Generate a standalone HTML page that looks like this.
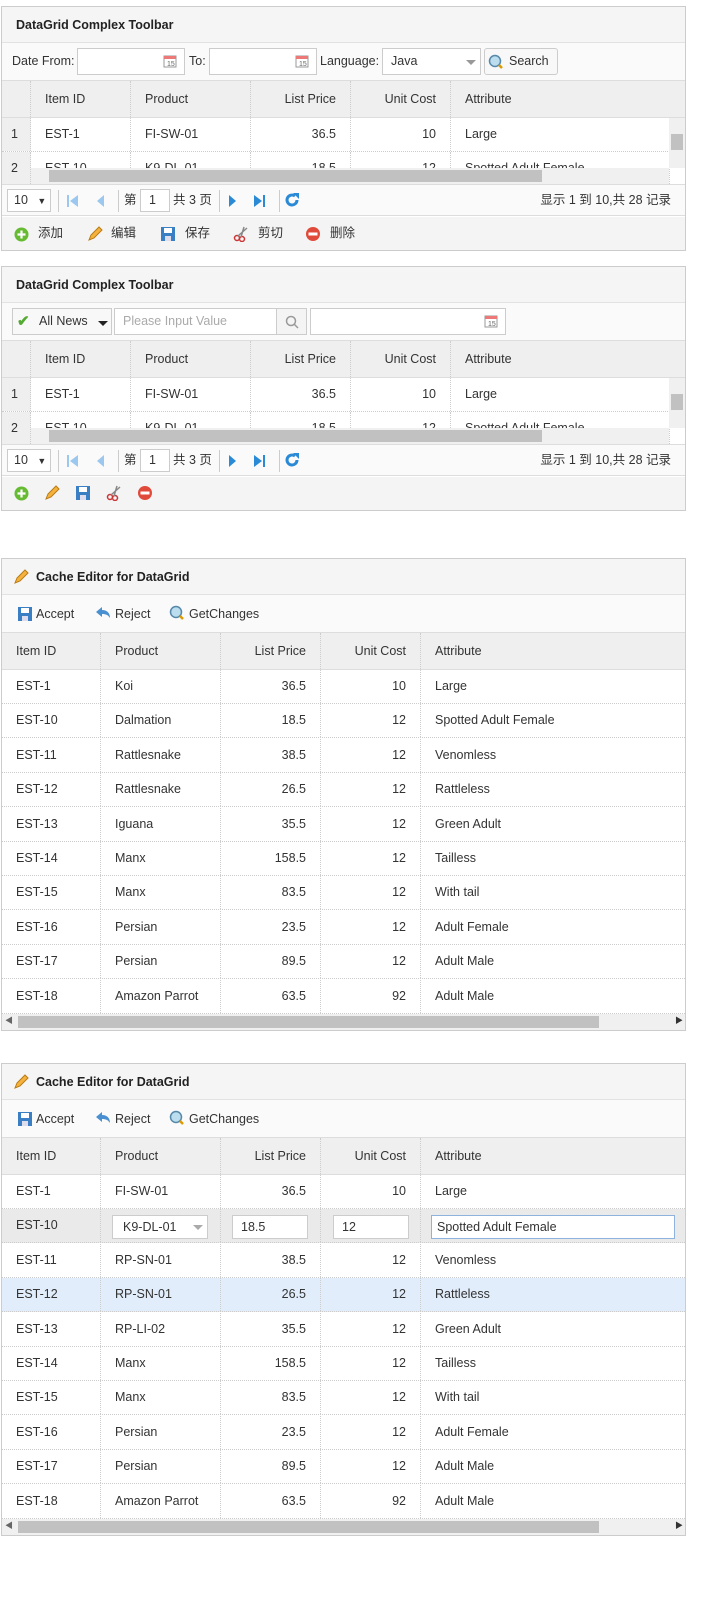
<!DOCTYPE html>
<html><head><meta charset="utf-8"><style>
*{box-sizing:border-box;margin:0;padding:0}
body{width:722px;height:1602px;background:#fff;font-family:"Liberation Sans","Noto Sans CJK SC",sans-serif;font-size:12.5px;color:#333;position:relative;overflow:hidden}
.p{position:absolute;left:1px;width:685px;border:1px solid #ccc;background:#fff;overflow:hidden}
.a{position:absolute}
.hd{position:absolute;left:0;top:0;width:100%;height:36px;background:#f5f5f5;border-bottom:1px solid #e2e2e2;font-weight:bold;font-size:12.5px;line-height:36px;padding-left:14px;color:#222}
.tb{position:absolute;left:0;top:36px;width:100%;height:38px;background:#fafafa;border-bottom:1px solid #ddd}
.r{position:absolute;left:0;display:flex;height:34px;border-bottom:1px dotted #ccc;background:#fff}
.gh{background:#efefef;height:37px;border-bottom:1px solid #ddd}
.c{border-right:1px dotted #ccc;padding:0 14px;line-height:33px;white-space:nowrap;overflow:hidden;flex:none}
.gh .c{line-height:36px}
.rt{text-align:right}
.rn{background:#efefef;padding:0 9px}
.inp{position:absolute;background:#fff;border:1px solid #ccc;height:27px;line-height:25px;padding-left:8px}
.hs{position:absolute;height:16px;background:#f0f0f0}
.hs i{position:absolute;top:2px;height:12px;background:#c1c1c1}
.pg{position:absolute;left:0;width:100%;height:32px;background:#fafafa;border-top:1px solid #ddd;border-bottom:1px solid #ddd}
.pg span{line-height:30px;top:0}
.sep{position:absolute;top:5px;width:1px;height:22px;background:#ccc}
.bt{position:absolute;left:0;width:100%;background:#f4f4f4}
.bt span{line-height:33px;top:0}
</style></head><body>

<!-- PANEL 1 -->
<div class="p" style="top:6px;height:245px">
 <div class="hd">DataGrid Complex Toolbar</div>
 <div class="tb">
  <span class="a" style="left:10px;top:11px">Date From:</span>
  <div class="inp" style="left:75px;top:5px;width:108px"></div>
  <svg class="a" style="left:161px;top:11px" width="14" height="14"><rect x="1" y="2" width="12" height="11" fill="#fff" stroke="#999"/><rect x="1" y="2" width="12" height="3" fill="#e77"/><text x="4" y="12" font-size="7" fill="#666">15</text></svg>
  <span class="a" style="left:187px;top:11px">To:</span>
  <div class="inp" style="left:207px;top:5px;width:108px"></div>
  <svg class="a" style="left:293px;top:11px" width="14" height="14"><rect x="1" y="2" width="12" height="11" fill="#fff" stroke="#999"/><rect x="1" y="2" width="12" height="3" fill="#e77"/><text x="4" y="12" font-size="7" fill="#666">15</text></svg>
  <span class="a" style="left:318px;top:11px">Language:</span>
  <div class="inp" style="left:380px;top:5px;width:99px">Java</div>
  <div class="a" style="left:464px;top:17px;border:5px solid transparent;border-top:5px solid #999"></div>
  <div class="inp" style="left:482px;top:5px;width:74px;border-radius:3px;padding-left:24px;background:#f8f8f8">Search</div>
  <svg class="a" style="left:486px;top:11px" width="16" height="16"><circle cx="7" cy="7" r="5.5" fill="#bde" stroke="#58a" stroke-width="1.5"/><line x1="11" y1="11" x2="14" y2="14" stroke="#d90" stroke-width="2.5"/></svg>
 </div>
 <div class="r gh" style="top:74px"><div class="c rn" style="width:29px"></div><div class="c" style="width:100px">Item ID</div><div class="c" style="width:120px">Product</div><div class="c rt" style="width:100px">List Price</div><div class="c rt" style="width:100px">Unit Cost</div><div class="c" style="width:236px;border:0">Attribute</div></div>
 <div class="r" style="top:111px"><div class="c rn" style="width:29px">1</div><div class="c" style="width:100px">EST-1</div><div class="c" style="width:120px">FI-SW-01</div><div class="c rt" style="width:100px">36.5</div><div class="c rt" style="width:100px">10</div><div class="c" style="width:219px">Large</div></div>
 <div class="r" style="top:145px;height:32px;border:0"><div class="c rn" style="width:29px">2</div><div class="c" style="width:100px">EST-10</div><div class="c" style="width:120px">K9-DL-01</div><div class="c rt" style="width:100px">18.5</div><div class="c rt" style="width:100px">12</div><div class="c" style="width:219px">Spotted Adult Female</div></div>
 <div class="a" style="left:667px;top:111px;width:16px;height:50px;background:#f0f0f0"><i class="a" style="left:2px;top:16px;width:12px;height:16px;background:#c1c1c1"></i></div>
 <div class="hs" style="left:29px;top:161px;width:638px"><i style="left:18px;width:493px"></i></div>
 <div class="pg" style="top:177px">
  <div class="inp" style="left:5px;top:4px;width:44px;height:23px;line-height:21px;padding-left:6px">10 <span style="font-size:9px;margin-left:6px;line-height:21px">▼</span></div>
  <div class="sep" style="left:56px"></div>
  <svg class="a" style="left:64px;top:9px" width="14" height="14"><rect x="1" y="1" width="2" height="12" fill="#9cc7ee"/><path d="M12 1L4 7l8 6z" fill="#9cc7ee"/></svg>
  <svg class="a" style="left:92px;top:9px" width="14" height="14"><path d="M10 1L3 7l7 6z" fill="#9cc7ee"/></svg>
  <div class="sep" style="left:116px"></div>
  <span class="a" style="left:122px">第</span>
  <div class="inp" style="left:138px;top:4px;width:30px;height:23px;line-height:21px">1</div>
  <span class="a" style="left:171px">共 3 页</span>
  <div class="sep" style="left:217px"></div>
  <svg class="a" style="left:223px;top:9px" width="14" height="14"><path d="M4 1l7 6-7 6z" fill="#2a8ad6"/></svg>
  <svg class="a" style="left:250px;top:9px" width="14" height="14"><path d="M2 1l8 6-8 6z" fill="#2a8ad6"/><rect x="11" y="1" width="2" height="12" fill="#2a8ad6"/></svg>
  <div class="sep" style="left:277px"></div>
  <svg class="a" style="left:282px;top:7px" width="16" height="16"><path d="M13 8a5 5 0 1 1-2-4" fill="none" stroke="#2a8ad6" stroke-width="3"/><path d="M9 1h6v6z" fill="#2a8ad6"/></svg>
  <span class="a" style="right:14px">显示 1 到 10,共 28 记录</span>
 </div>
 <div class="bt" style="top:210px;height:33px">
  <svg class="a" style="left:12px;top:10px" width="15" height="15"><circle cx="7.5" cy="7.5" r="7" fill="#6b3"/><path d="M7.5 3.5v8M3.5 7.5h8" stroke="#fff" stroke-width="2.2"/></svg>
  <span class="a" style="left:36px">添加</span>
  <svg class="a" style="left:85px;top:9px" width="16" height="16"><path d="M2 14l2-5 8-8 3 3-8 8z" fill="#f5b33d" stroke="#b87a14"/></svg>
  <span class="a" style="left:109px">编辑</span>
  <svg class="a" style="left:158px;top:9px" width="16" height="16"><rect x="1" y="1" width="14" height="14" fill="#3a7fc4"/><rect x="4" y="2" width="8" height="5" fill="#fff"/><rect x="5" y="10" width="6" height="5" fill="#dde"/></svg>
  <span class="a" style="left:183px">保存</span>
  <svg class="a" style="left:231px;top:9px" width="16" height="16"><circle cx="4" cy="12" r="2.5" fill="none" stroke="#c33" stroke-width="1.5"/><circle cx="9" cy="13" r="2.5" fill="none" stroke="#c33" stroke-width="1.5"/><path d="M5 10L14 2M8 11L11 1" stroke="#888" stroke-width="1.5"/></svg>
  <span class="a" style="left:256px">剪切</span>
  <svg class="a" style="left:303px;top:9px" width="16" height="16"><circle cx="8" cy="8" r="7" fill="#e04a3a"/><rect x="3.5" y="6.5" width="9" height="3" fill="#fff"/></svg>
  <span class="a" style="left:328px">删除</span>
 </div>
</div>

<!-- PANEL 2 -->
<div class="p" style="top:266px;height:245px">
 <div class="hd">DataGrid Complex Toolbar</div>
 <div class="tb">
  <div class="inp" style="left:10px;top:5px;width:100px;background:#f8f8f8;padding-left:26px">All News</div>
  <span class="a" style="left:15px;top:9px;color:#5a3;font-size:15px;font-weight:bold">✔</span>
  <div class="a" style="left:96px;top:18px;border:5px solid transparent;border-top:5px solid #222"></div>
  <div class="inp" style="left:112px;top:5px;width:163px;color:#aaa">Please Input Value</div>
  <div class="inp" style="left:274px;top:5px;width:31px;background:#f4f4f4"></div>
  <svg class="a" style="left:283px;top:12px" width="14" height="14"><circle cx="6" cy="6" r="4.5" fill="none" stroke="#999" stroke-width="1.5"/><line x1="9" y1="9" x2="13" y2="13" stroke="#999" stroke-width="1.5"/></svg>
  <div class="inp" style="left:308px;top:5px;width:196px"></div>
  <svg class="a" style="left:482px;top:11px" width="14" height="14"><rect x="1" y="2" width="12" height="11" fill="#fff" stroke="#999"/><rect x="1" y="2" width="12" height="3" fill="#e77"/><text x="4" y="12" font-size="7" fill="#666">15</text></svg>
 </div>
 <div class="r gh" style="top:74px"><div class="c rn" style="width:29px"></div><div class="c" style="width:100px">Item ID</div><div class="c" style="width:120px">Product</div><div class="c rt" style="width:100px">List Price</div><div class="c rt" style="width:100px">Unit Cost</div><div class="c" style="width:236px;border:0">Attribute</div></div>
 <div class="r" style="top:111px"><div class="c rn" style="width:29px">1</div><div class="c" style="width:100px">EST-1</div><div class="c" style="width:120px">FI-SW-01</div><div class="c rt" style="width:100px">36.5</div><div class="c rt" style="width:100px">10</div><div class="c" style="width:219px">Large</div></div>
 <div class="r" style="top:145px;height:32px;border:0"><div class="c rn" style="width:29px">2</div><div class="c" style="width:100px">EST-10</div><div class="c" style="width:120px">K9-DL-01</div><div class="c rt" style="width:100px">18.5</div><div class="c rt" style="width:100px">12</div><div class="c" style="width:219px">Spotted Adult Female</div></div>
 <div class="a" style="left:667px;top:111px;width:16px;height:50px;background:#f0f0f0"><i class="a" style="left:2px;top:16px;width:12px;height:16px;background:#c1c1c1"></i></div>
 <div class="hs" style="left:29px;top:161px;width:638px"><i style="left:18px;width:493px"></i></div>
 <div class="pg" style="top:177px">
  <div class="inp" style="left:5px;top:4px;width:44px;height:23px;line-height:21px;padding-left:6px">10 <span style="font-size:9px;margin-left:6px;line-height:21px">▼</span></div>
  <div class="sep" style="left:56px"></div>
  <svg class="a" style="left:64px;top:9px" width="14" height="14"><rect x="1" y="1" width="2" height="12" fill="#9cc7ee"/><path d="M12 1L4 7l8 6z" fill="#9cc7ee"/></svg>
  <svg class="a" style="left:92px;top:9px" width="14" height="14"><path d="M10 1L3 7l7 6z" fill="#9cc7ee"/></svg>
  <div class="sep" style="left:116px"></div>
  <span class="a" style="left:122px">第</span>
  <div class="inp" style="left:138px;top:4px;width:30px;height:23px;line-height:21px">1</div>
  <span class="a" style="left:171px">共 3 页</span>
  <div class="sep" style="left:217px"></div>
  <svg class="a" style="left:223px;top:9px" width="14" height="14"><path d="M4 1l7 6-7 6z" fill="#2a8ad6"/></svg>
  <svg class="a" style="left:250px;top:9px" width="14" height="14"><path d="M2 1l8 6-8 6z" fill="#2a8ad6"/><rect x="11" y="1" width="2" height="12" fill="#2a8ad6"/></svg>
  <div class="sep" style="left:277px"></div>
  <svg class="a" style="left:282px;top:7px" width="16" height="16"><path d="M13 8a5 5 0 1 1-2-4" fill="none" stroke="#2a8ad6" stroke-width="3"/><path d="M9 1h6v6z" fill="#2a8ad6"/></svg>
  <span class="a" style="right:14px">显示 1 到 10,共 28 记录</span>
 </div>
 <div class="bt" style="top:210px;height:33px">
  <svg class="a" style="left:12px;top:9px" width="15" height="15"><circle cx="7.5" cy="7.5" r="7" fill="#6b3"/><path d="M7.5 3.5v8M3.5 7.5h8" stroke="#fff" stroke-width="2.2"/></svg>
  <svg class="a" style="left:42px;top:8px" width="16" height="16"><path d="M2 14l2-5 8-8 3 3-8 8z" fill="#f5b33d" stroke="#b87a14"/></svg>
  <svg class="a" style="left:73px;top:8px" width="16" height="16"><rect x="1" y="1" width="14" height="14" fill="#3a7fc4"/><rect x="4" y="2" width="8" height="5" fill="#fff"/><rect x="5" y="10" width="6" height="5" fill="#dde"/></svg>
  <svg class="a" style="left:104px;top:8px" width="16" height="16"><circle cx="4" cy="12" r="2.5" fill="none" stroke="#c33" stroke-width="1.5"/><circle cx="9" cy="13" r="2.5" fill="none" stroke="#c33" stroke-width="1.5"/><path d="M5 10L14 2M8 11L11 1" stroke="#888" stroke-width="1.5"/></svg>
  <svg class="a" style="left:135px;top:8px" width="16" height="16"><circle cx="8" cy="8" r="7" fill="#e04a3a"/><rect x="3.5" y="6.5" width="9" height="3" fill="#fff"/></svg>
 </div>
</div>

<!-- PANEL 3 -->
<div class="p" style="top:558px;height:473px">
 <div class="hd" style="padding-left:34px">Cache Editor for DataGrid</div>
 <svg class="a" style="left:11px;top:10px" width="16" height="16"><path d="M2 14l2-5 8-8 3 3-8 8z" fill="#f5b33d" stroke="#b87a14"/></svg>
 <div class="tb">
  <svg class="a" style="left:15px;top:11px" width="16" height="16"><rect x="1" y="1" width="14" height="14" fill="#3a7fc4"/><rect x="4" y="2" width="8" height="5" fill="#fff"/><rect x="5" y="10" width="6" height="5" fill="#dde"/></svg>
  <span class="a" style="left:34px;top:12px">Accept</span>
  <svg class="a" style="left:93px;top:11px" width="16" height="14"><path d="M1 6l6-5v3c5 0 8 3 8 8-2-3-4-4-8-4v3z" fill="#4a90d0"/></svg>
  <span class="a" style="left:113px;top:12px">Reject</span>
  <svg class="a" style="left:167px;top:10px" width="16" height="16"><circle cx="7" cy="7" r="5.5" fill="#bde" stroke="#58a" stroke-width="1.5"/><line x1="11" y1="11" x2="14" y2="14" stroke="#d90" stroke-width="2.5"/></svg>
  <span class="a" style="left:187px;top:12px">GetChanges</span>
 </div>
 <div class="r gh" style="top:74px"><div class="c" style="width:99px">Item ID</div><div class="c" style="width:120px">Product</div><div class="c rt" style="width:100px">List Price</div><div class="c rt" style="width:100px">Unit Cost</div><div class="c" style="width:264px;border:0">Attribute</div></div>
 <div class="a" style="left:0;top:111px;width:683px">
  <div class="r" style="top:0"><div class="c" style="width:99px">EST-1</div><div class="c" style="width:120px">Koi</div><div class="c rt" style="width:100px">36.5</div><div class="c rt" style="width:100px">10</div><div class="c" style="width:264px;border:0">Large</div></div>
  <div class="r" style="top:34.4px"><div class="c" style="width:99px">EST-10</div><div class="c" style="width:120px">Dalmation</div><div class="c rt" style="width:100px">18.5</div><div class="c rt" style="width:100px">12</div><div class="c" style="width:264px;border:0">Spotted Adult Female</div></div>
  <div class="r" style="top:68.8px"><div class="c" style="width:99px">EST-11</div><div class="c" style="width:120px">Rattlesnake</div><div class="c rt" style="width:100px">38.5</div><div class="c rt" style="width:100px">12</div><div class="c" style="width:264px;border:0">Venomless</div></div>
  <div class="r" style="top:103.2px"><div class="c" style="width:99px">EST-12</div><div class="c" style="width:120px">Rattlesnake</div><div class="c rt" style="width:100px">26.5</div><div class="c rt" style="width:100px">12</div><div class="c" style="width:264px;border:0">Rattleless</div></div>
  <div class="r" style="top:137.6px"><div class="c" style="width:99px">EST-13</div><div class="c" style="width:120px">Iguana</div><div class="c rt" style="width:100px">35.5</div><div class="c rt" style="width:100px">12</div><div class="c" style="width:264px;border:0">Green Adult</div></div>
  <div class="r" style="top:172px"><div class="c" style="width:99px">EST-14</div><div class="c" style="width:120px">Manx</div><div class="c rt" style="width:100px">158.5</div><div class="c rt" style="width:100px">12</div><div class="c" style="width:264px;border:0">Tailless</div></div>
  <div class="r" style="top:206.4px"><div class="c" style="width:99px">EST-15</div><div class="c" style="width:120px">Manx</div><div class="c rt" style="width:100px">83.5</div><div class="c rt" style="width:100px">12</div><div class="c" style="width:264px;border:0">With tail</div></div>
  <div class="r" style="top:240.8px"><div class="c" style="width:99px">EST-16</div><div class="c" style="width:120px">Persian</div><div class="c rt" style="width:100px">23.5</div><div class="c rt" style="width:100px">12</div><div class="c" style="width:264px;border:0">Adult Female</div></div>
  <div class="r" style="top:275.2px"><div class="c" style="width:99px">EST-17</div><div class="c" style="width:120px">Persian</div><div class="c rt" style="width:100px">89.5</div><div class="c rt" style="width:100px">12</div><div class="c" style="width:264px;border:0">Adult Male</div></div>
  <div class="r" style="top:309.6px"><div class="c" style="width:99px">EST-18</div><div class="c" style="width:120px">Amazon Parrot</div><div class="c rt" style="width:100px">63.5</div><div class="c rt" style="width:100px">92</div><div class="c" style="width:264px;border:0">Adult Male</div></div>
 </div>
 <div class="hs" style="left:0;top:455px;width:683px"><span class="a" style="left:3px;top:1px;font-size:8px;color:#666">◀</span><i style="left:16px;width:581px"></i><span class="a" style="left:673px;top:1px;font-size:8px;color:#333">▶</span></div>
</div>

<!-- PANEL 4 -->
<div class="p" style="top:1063px;height:473px">
 <div class="hd" style="padding-left:34px">Cache Editor for DataGrid</div>
 <svg class="a" style="left:11px;top:10px" width="16" height="16"><path d="M2 14l2-5 8-8 3 3-8 8z" fill="#f5b33d" stroke="#b87a14"/></svg>
 <div class="tb">
  <svg class="a" style="left:15px;top:11px" width="16" height="16"><rect x="1" y="1" width="14" height="14" fill="#3a7fc4"/><rect x="4" y="2" width="8" height="5" fill="#fff"/><rect x="5" y="10" width="6" height="5" fill="#dde"/></svg>
  <span class="a" style="left:34px;top:12px">Accept</span>
  <svg class="a" style="left:93px;top:11px" width="16" height="14"><path d="M1 6l6-5v3c5 0 8 3 8 8-2-3-4-4-8-4v3z" fill="#4a90d0"/></svg>
  <span class="a" style="left:113px;top:12px">Reject</span>
  <svg class="a" style="left:167px;top:10px" width="16" height="16"><circle cx="7" cy="7" r="5.5" fill="#bde" stroke="#58a" stroke-width="1.5"/><line x1="11" y1="11" x2="14" y2="14" stroke="#d90" stroke-width="2.5"/></svg>
  <span class="a" style="left:187px;top:12px">GetChanges</span>
 </div>
 <div class="r gh" style="top:74px"><div class="c" style="width:99px">Item ID</div><div class="c" style="width:120px">Product</div><div class="c rt" style="width:100px">List Price</div><div class="c rt" style="width:100px">Unit Cost</div><div class="c" style="width:264px;border:0">Attribute</div></div>
 <div class="a" style="left:0;top:111px;width:683px">
  <div class="r" style="top:0"><div class="c" style="width:99px">EST-1</div><div class="c" style="width:120px">FI-SW-01</div><div class="c rt" style="width:100px">36.5</div><div class="c rt" style="width:100px">10</div><div class="c" style="width:264px;border:0">Large</div></div>
  <div class="r" style="top:34.4px;background:#eaeaea"><div class="c" style="width:99px">EST-10</div><div class="c" style="width:120px"></div><div class="c" style="width:100px"></div><div class="c" style="width:100px"></div><div class="c" style="width:264px;border:0"></div></div>
  <div class="inp" style="left:110px;top:40px;width:96px;height:24px;line-height:22px;padding-left:10px">K9-DL-01</div>
  <div class="a" style="left:191px;top:50px;border:5px solid transparent;border-top:5px solid #aaa"></div>
  <div class="inp" style="left:230px;top:40px;width:76px;height:24px;line-height:22px">18.5</div>
  <div class="inp" style="left:331px;top:40px;width:76px;height:24px;line-height:22px">12</div>
  <div class="inp" style="left:429px;top:40px;width:244px;height:24px;line-height:22px;padding-left:5px;border-color:#8fb3dc">Spotted Adult Female</div>
  <div class="r" style="top:68.8px"><div class="c" style="width:99px">EST-11</div><div class="c" style="width:120px">RP-SN-01</div><div class="c rt" style="width:100px">38.5</div><div class="c rt" style="width:100px">12</div><div class="c" style="width:264px;border:0">Venomless</div></div>
  <div class="r" style="top:103.2px;background:#e1edfb"><div class="c" style="width:99px">EST-12</div><div class="c" style="width:120px">RP-SN-01</div><div class="c rt" style="width:100px">26.5</div><div class="c rt" style="width:100px">12</div><div class="c" style="width:264px;border:0">Rattleless</div></div>
  <div class="r" style="top:137.6px"><div class="c" style="width:99px">EST-13</div><div class="c" style="width:120px">RP-LI-02</div><div class="c rt" style="width:100px">35.5</div><div class="c rt" style="width:100px">12</div><div class="c" style="width:264px;border:0">Green Adult</div></div>
  <div class="r" style="top:172px"><div class="c" style="width:99px">EST-14</div><div class="c" style="width:120px">Manx</div><div class="c rt" style="width:100px">158.5</div><div class="c rt" style="width:100px">12</div><div class="c" style="width:264px;border:0">Tailless</div></div>
  <div class="r" style="top:206.4px"><div class="c" style="width:99px">EST-15</div><div class="c" style="width:120px">Manx</div><div class="c rt" style="width:100px">83.5</div><div class="c rt" style="width:100px">12</div><div class="c" style="width:264px;border:0">With tail</div></div>
  <div class="r" style="top:240.8px"><div class="c" style="width:99px">EST-16</div><div class="c" style="width:120px">Persian</div><div class="c rt" style="width:100px">23.5</div><div class="c rt" style="width:100px">12</div><div class="c" style="width:264px;border:0">Adult Female</div></div>
  <div class="r" style="top:275.2px"><div class="c" style="width:99px">EST-17</div><div class="c" style="width:120px">Persian</div><div class="c rt" style="width:100px">89.5</div><div class="c rt" style="width:100px">12</div><div class="c" style="width:264px;border:0">Adult Male</div></div>
  <div class="r" style="top:309.6px"><div class="c" style="width:99px">EST-18</div><div class="c" style="width:120px">Amazon Parrot</div><div class="c rt" style="width:100px">63.5</div><div class="c rt" style="width:100px">92</div><div class="c" style="width:264px;border:0">Adult Male</div></div>
 </div>
 <div class="hs" style="left:0;top:455px;width:683px"><span class="a" style="left:3px;top:1px;font-size:8px;color:#666">◀</span><i style="left:16px;width:581px"></i><span class="a" style="left:673px;top:1px;font-size:8px;color:#333">▶</span></div>
</div>

</body></html>
